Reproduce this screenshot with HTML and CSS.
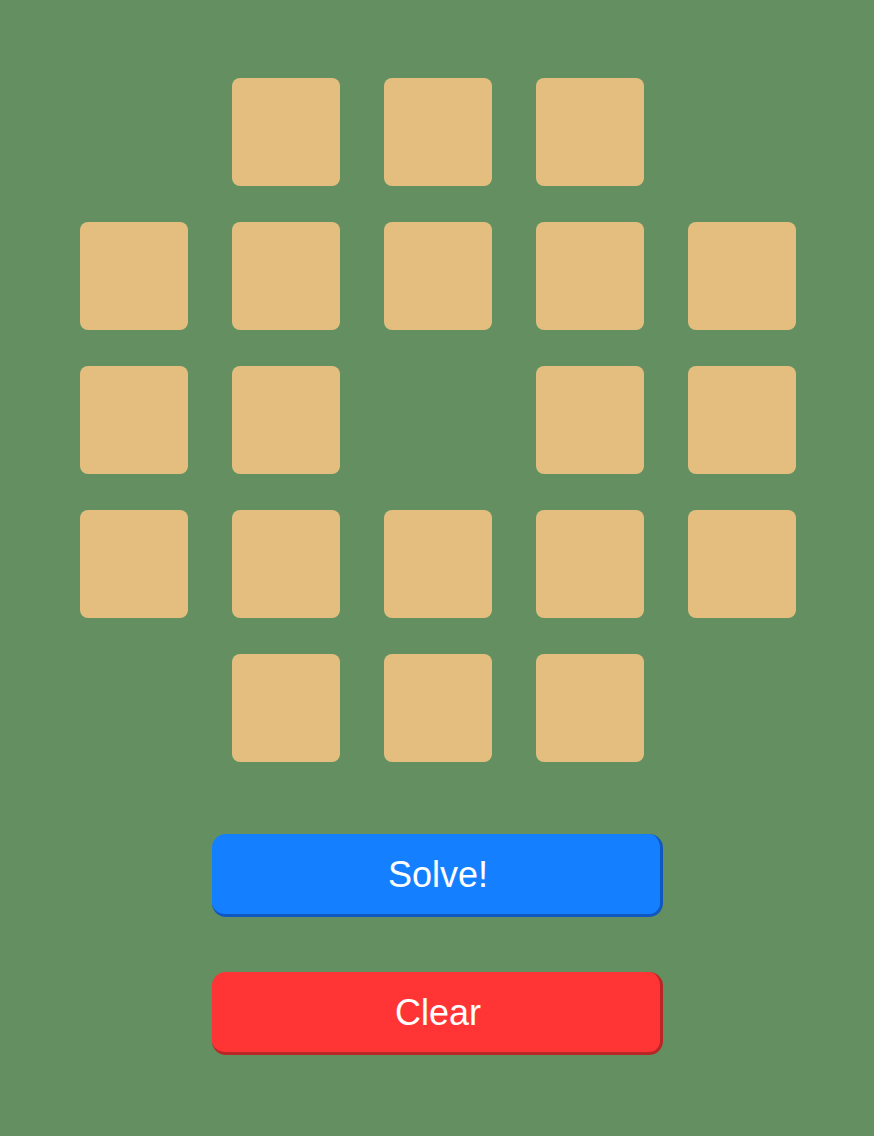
FILE: index.html
```html
<!DOCTYPE html>
<html>
<head>
<meta charset="utf-8">
<link rel="stylesheet" href="styles.css">
</head>
<body>
<main class="page">
  <div class="board">
    <div class="cell empty"></div><div class="cell"></div><div class="cell"></div><div class="cell"></div><div class="cell empty"></div>
    <div class="cell"></div><div class="cell"></div><div class="cell"></div><div class="cell"></div><div class="cell"></div>
    <div class="cell"></div><div class="cell"></div><div class="cell empty"></div><div class="cell"></div><div class="cell"></div>
    <div class="cell"></div><div class="cell"></div><div class="cell"></div><div class="cell"></div><div class="cell"></div>
    <div class="cell empty"></div><div class="cell"></div><div class="cell"></div><div class="cell"></div><div class="cell empty"></div>
  </div>
  <div class="actions">
    <button class="btn solve">Solve!</button>
    <button class="btn clear">Clear</button>
  </div>
</main>
</body>
</html>
```
FILE: styles.css
```css
html, body {
  margin: 0;
  padding: 0;
  background: #648f60;
  height: 100%;
}
.page {
  padding: 78px 0 0 80px;
  font-family: "Liberation Sans", Arial, sans-serif;
}
.board {
  display: grid;
  grid-template-columns: repeat(5, 108px);
  grid-auto-rows: 108px;
  gap: 36px 44px;
  width: 716px;
}
.cell {
  background: #e3be7e;
  border-radius: 8px;
}
.cell.empty {
  background: transparent;
}
.actions {
  display: flex;
  flex-direction: column;
  gap: 55px;
  margin: 72px 0 0 132px;
}
.btn {
  box-sizing: border-box;
  width: 451px;
  height: 83px;
  border-style: solid;
  border-width: 0 3px 3px 0;
  border-radius: 14px;
  color: #fff;
  font-family: "Liberation Sans", Arial, sans-serif;
  font-size: 36px;
  padding: 2px 0 0 4px;
  cursor: pointer;
}
.solve {
  background: #1580ff;
  border-color: #1157c0;
}
.clear {
  background: #ff3535;
  border-color: #b92626;
}
```
